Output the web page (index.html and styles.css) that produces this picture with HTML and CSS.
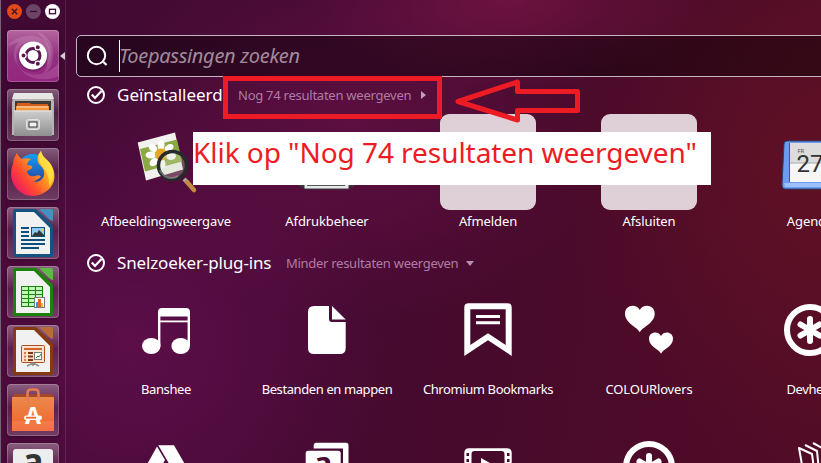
FILE: index.html
```
<!DOCTYPE html>
<html lang="nl">
<head>
    <meta charset="UTF-8">
    <meta name="viewport" content="width=device-width, initial-scale=1.0">
    <title>Toepassingen zoeken</title>
    <link rel="stylesheet" href="styles.css">
</head>
<body>
    <aside class="launcher">
        <div class="window-buttons">
            <svg width="60" height="16" viewBox="0 0 60 16">
                <circle cx="7.5" cy="7.5" r="7.5" fill="#df4b16"/>
                <path d="M4.8 4.8l5.4 5.4M10.2 4.8l-5.4 5.4" stroke="#4a1626" stroke-width="1.4"/>
                <circle cx="26.4" cy="7.5" r="7.5" fill="#6c4465"/>
                <path d="M23 7.5h7" stroke="#3d0b31" stroke-width="1.3"/>
                <circle cx="45.5" cy="7.5" r="7.5" fill="#fff"/>
                <rect x="42.5" y="5.3" width="6" height="4.4" fill="none" stroke="#3d0b31" stroke-width="1.3"/>
            </svg>
        </div>
        <div class="tile tile-dash">
            <svg viewBox="0 0 52 52">
                <g fill="#fff" fill-opacity=".13">
                    <path d="M0 16C10 4 32 2 41 14c5 8 3 16-1 22c1-12-3-22-14-24C16 10 8 18 9 32C5 28 6 18 12 12z"/>
                    <path d="M9 22C6 36 18 47 34 44c8-2 14-6 18-12v14c-14 6-32 4-39-8c-3-5-4-10-4-16z"/>
                    <path d="M30 2c14 4 20 18 14 34c-1 3-4 6-8 8c8-12 9-28-6-42z"/>
                </g>
                <circle cx="26" cy="27" r="14.5" fill="#5d1552" opacity=".5"/>
                <circle cx="26" cy="25.5" r="14" fill="#fff"/>
                <circle cx="26" cy="25.5" r="7" fill="none" stroke="#5a1750" stroke-width="3"/>
                <g fill="#5a1750" stroke="#fff" stroke-width="1.2">
                    <circle cx="16.5" cy="25.5" r="2.6"/>
                    <circle cx="30.8" cy="17.3" r="2.6"/>
                    <circle cx="30.8" cy="33.7" r="2.6"/>
                </g>
            </svg>
            <span class="active-arrow"></span>
        </div>
        <div class="tile">
            <svg viewBox="0 0 52 52">
                <defs>
                    <linearGradient id="drawer" x1="0" y1="0" x2="0" y2="1">
                        <stop offset="0" stop-color="#cfcfcf"/><stop offset="1" stop-color="#8f8f8f"/>
                    </linearGradient>
                </defs>
                <path d="M7 4h38l2 9v33H5V13z" fill="#b4b4b2"/>
                <path d="M7 4h38l2 6H5z" fill="#e6e6e4"/>
                <rect x="8" y="12" width="36" height="10" fill="#403a38"/>
                <path d="M10 14h13l1 1h17v6H10z" fill="#d35d1e"/>
                <path d="M9 17h33v5H9z" fill="#f3953b"/>
                <path d="M10 18h31" stroke="#ffe0b5"/>
                <rect x="7" y="21.5" width="38" height="25.5" fill="url(#drawer)"/>
                <path d="M7 22h38" stroke="#e8e8e8"/>
                <rect x="19.5" y="30.5" width="13" height="10" rx="2" fill="#cbcbcb" stroke="#e4e4e4"/>
                <rect x="22" y="33" width="8" height="5" fill="#f3f3f3" stroke="#333"/>
            </svg>
        </div>
        <div class="tile">
            <svg viewBox="0 0 52 52">
                <defs>
                    <linearGradient id="fox" x1="1" y1="0" x2="0" y2=".8">
                        <stop offset="0" stop-color="#fff44a"/><stop offset=".4" stop-color="#ffa41c"/>
                        <stop offset=".7" stop-color="#ff4a32"/><stop offset="1" stop-color="#e8116d"/>
                    </linearGradient>
                    <linearGradient id="globe" x1="0" y1="0" x2="0" y2="1">
                        <stop offset="0" stop-color="#159df5"/><stop offset="1" stop-color="#28318f"/>
                    </linearGradient>
                </defs>
                <circle cx="26" cy="23" r="17" fill="url(#globe)"/>
                <path d="M10 5c1 3 3 5 5 6c3-1 6-1 9 0c-3 2-4 4-4 6l5 1c1 2-2 4-5 5c0 4 4 6 8 5c3-1 5-1 6 1c-3 2-5 4-8 4c5 2 10-1 11-6c1-5-2-8-5-11c-3-5-1-10 2-13c1 5 4 7 8 11c8 9 7 22-1 28c-9 8-23 8-31-1C3 33 3 23 6 16c0-4 2-8 4-11z" fill="url(#fox)"/>
                <path d="M34 3c1 5 4 7 8 11c6 8 6 18 0 24c1-9-3-15-7-20c-4-6-4-11-1-15z" fill="#ffe54a" opacity=".8"/>
            </svg>
        </div>
        <div class="tile">
            <svg viewBox="0 0 52 52">
                <path d="M8 2h21l17 17v29q0 2-2 2H8q-2 0-2-2V4q0-2 2-2z" fill="#14527f"/>
                <path d="M33 2h11q2 0 2 2v10q-2 0-4-2l-7-7q-2-1-2-3z" fill="#4690bf"/>
                <path d="M9 5h18l16 16v26H9z" fill="#f1f1f1"/>
                <g stroke="#0d4f7c" stroke-width="2">
                    <path d="M14 21h8M14 25h8M14 29h8M14 33h24M14 37h24M14 41h18"/>
                </g>
                <rect x="24.5" y="20.5" width="13" height="9" fill="#8dcbf4" stroke="#0d4f7c"/>
                <path d="M25 29l3-4 2 1 2-3 5 5v1z" fill="#373737"/>
                <circle cx="35" cy="23" r="1.3" fill="#f2cf4a"/>
            </svg>
        </div>
        <div class="tile">
            <svg viewBox="0 0 52 52">
                <path d="M8 2h21l17 17v29q0 2-2 2H8q-2 0-2-2V4q0-2 2-2z" fill="#1b8209"/>
                <path d="M33 2h11q2 0 2 2v10q-2 0-4-2l-7-7q-2-1-2-3z" fill="#5cba45"/>
                <path d="M9 5h18l16 16v26H9z" fill="#f1f1f1"/>
                <rect x="14" y="20" width="22" height="21" fill="#168507"/>
                <g fill="#c4f5ba">
                    <path d="M15 21h6v3h-6zM22 21h6v3h-6zM29 21h6v3h-6zM15 25h6v3h-6zM15 29h6v3h-6zM15 33h6v3h-6zM15 37h6v3h-6z"/>
                    <path d="M22 25h6v3h-6zM29 25h6v3h-6zM22 29h6v3h-6zM29 29h6v3h-6zM22 33h6v3h-6zM22 37h6v3h-6z"/>
                </g>
                <rect x="27.5" y="31.5" width="10" height="10" fill="#fff" stroke="#777"/>
                <path d="M29 36h2v5h-2z" fill="#3d94d8"/>
                <path d="M31 33h3v8h-3z" fill="#e3641b"/>
                <path d="M34 37h2v4h-2z" fill="#f0b43d"/>
            </svg>
        </div>
        <div class="tile">
            <svg viewBox="0 0 52 52">
                <path d="M8 2h21l17 17v29q0 2-2 2H8q-2 0-2-2V4q0-2 2-2z" fill="#843b10"/>
                <path d="M33 2h11q2 0 2 2v10q-2 0-4-2l-7-7q-2-1-2-3z" fill="#bb6b37"/>
                <path d="M9 5h18l16 16v26H9z" fill="#f1f1f1"/>
                <rect x="14.5" y="20.5" width="23" height="17" rx="1" fill="#fbe3d1" stroke="#b34e18"/>
                <path d="M17 24h18" stroke="#d2622a" stroke-width="2"/>
                <path d="M17 28h2M17 31.5h2M17 35h2" stroke="#e07a42" stroke-width="2"/>
                <path d="M21 28h5M21 31.5h5M21 35h5" stroke="#8a3409" stroke-width="2"/>
                <rect x="27.5" y="27.5" width="7" height="7" fill="#fff" stroke="#777"/>
                <path d="M29 33l2-2 1 1 2-3" fill="none" stroke="#2b9c2b"/>
                <path d="M20 41l6-3 6 3M26 38v3" fill="none" stroke="#8c8c8c" stroke-width="1.5"/>
            </svg>
        </div>
        <div class="tile">
            <svg viewBox="0 0 52 52">
                <defs>
                    <linearGradient id="bag" x1="0" y1="0" x2="0" y2="1">
                        <stop offset="0" stop-color="#e98a4b"/><stop offset="1" stop-color="#f2622b"/>
                    </linearGradient>
                </defs>
                <path d="M7 10h38l2 4H5z" fill="#a8462a"/>
                <rect x="5" y="13" width="42" height="34" fill="url(#bag)"/>
                <rect x="5" y="37" width="42" height="10" fill="#fff" opacity=".1"/>
                <path d="M20.500 17V9q0-3.500 3.500-3.500h4q3.500 0 3.500 3.500v8" fill="none" stroke="#e67a50" stroke-width="2.6"/>
                <text x="26" y="40" class="bag-letter">A</text>
                <rect x="17" y="31.5" width="18" height="4.4" rx="2.2" fill="#fff"/>
                <path d="M19 33.700h10" stroke="#f0662c" stroke-width="1.8"/>
            </svg>
        </div>
        <div class="tile">
            <svg viewBox="0 0 52 52">
                <rect x="6" y="6" width="40" height="40" rx="3" fill="#ededed"/>
                <text x="26" y="31" class="amazon-letter">a</text>
            </svg>
        </div>
    </aside>

    <main class="dash">
        <div class="search">
            <svg class="search-icon" width="24" height="24" viewBox="0 0 24 24">
                <circle cx="10.5" cy="11.5" r="8.7" fill="none" stroke="#fff" stroke-width="2"/>
                <path d="M17.500 18l3 3" stroke="#fff" stroke-width="2.2"/>
            </svg>
            <span class="placeholder">Toepassingen zoeken</span>
        </div>

        <section class="group installed-group">
            <div class="group-header">
                <svg class="check" width="20" height="20" viewBox="0 0 20 20">
                    <circle cx="10" cy="10" r="8" fill="none" stroke="#fff" stroke-width="2"/>
                    <path d="M5.800 9.500l3.200 3.500 6.500-7" fill="none" stroke="#fff" stroke-width="2.2"/>
                </svg>
                <h2 class="installed">Geïnstalleerd</h2>
                <span class="more">Nog 74 resultaten weergeven</span>
                <span class="arrow-right"></span>
            </div>
            <div class="grid">
                <div class="app">
                    <svg viewBox="0 0 96 96">
                        <path d="M19.700 28.500L57 18.500l8 37-37 11z" fill="#f1f1ee"/>
                        <path d="M22 35l37-9.500 5 22-37 10z" fill="#8aa843"/>
                        <g fill="#fff">
                            <ellipse cx="43" cy="31" rx="3.5" ry="5.5"/>
                            <ellipse cx="51" cy="34" rx="5" ry="3.5" transform="rotate(-35 51 34)"/>
                            <ellipse cx="35" cy="34" rx="5" ry="3.5" transform="rotate(40 35 34)"/>
                            <ellipse cx="33" cy="41" rx="5.5" ry="3.5"/>
                            <ellipse cx="36" cy="48" rx="5" ry="3.5" transform="rotate(-40 36 48)"/>
                            <ellipse cx="44" cy="50" rx="3.5" ry="5"/>
                            <ellipse cx="53" cy="42" rx="5" ry="4"/>
                        </g>
                        <circle cx="43" cy="40.5" r="6" fill="#e7a523"/>
                        <circle cx="54.5" cy="51.5" r="14" fill="#cdd8bb" fill-opacity=".3" stroke="#262b2a" stroke-width="3.5"/>
                        <path d="M42 56c3 8 12 10 18 6" fill="none" stroke="#fff" stroke-width="2" opacity=".3"/>
                        <path d="M66 65l4 4" stroke="#a9a9a9" stroke-width="4"/>
                        <path d="M69 68l7 8" stroke="#c38a42" stroke-width="4.5" stroke-linecap="round"/>
                    </svg>
                    <span>Afbeeldingsweergave</span>
                </div>
                <div class="app">
                    <svg viewBox="0 0 96 96">
                        <path d="M19 70h57l-2 3H21z" fill="#343a3c"/>
                        <path d="M25 60h45v15H25z" fill="#e9e9e9" stroke="#343a3c"/>
                        <path d="M28 71.500h38" stroke="#555" stroke-width="1.2"/>
                    </svg>
                    <span>Afdrukbeheer</span>
                </div>
                <div class="app">
                    <div class="blank"></div>
                    <span>Afmelden</span>
                </div>
                <div class="app">
                    <div class="blank"></div>
                    <span>Afsluiten</span>
                </div>
                <div class="app">
                    <svg viewBox="0 0 96 96">
                        <path d="M25 27h50v48H23q-3 0-3-4l2-41q0-3 3-3z" fill="#6a9df0" stroke="#27406f"/>
                        <path d="M22 69h53v4H23z" fill="#9cc1ff"/>
                        <rect x="27" y="29" width="48" height="39" fill="#f6f6f6"/>
                        <rect x="27" y="29" width="48" height="20" fill="#dcdcdc"/>
                        <path d="M27 49h48" stroke="#aaa"/>
                        <path d="M27.500 29v39" stroke="#555"/>
                        <text x="35.5" y="39" class="cal-day">FR</text>
                        <text x="34.5" y="58" class="cal-date">27</text>
                    </svg>
                    <span>Agenda</span>
                </div>
            </div>
        </section>

        <section class="group plugins-group">
            <div class="group-header">
                <svg class="check" width="20" height="20" viewBox="0 0 20 20">
                    <circle cx="10" cy="10" r="8" fill="none" stroke="#fff" stroke-width="2"/>
                    <path d="M5.800 9.500l3.200 3.500 6.500-7" fill="none" stroke="#fff" stroke-width="2.2"/>
                </svg>
                <h2 class="plugins">Snelzoeker-plug-ins</h2>
                <span class="more">Minder resultaten weergeven</span>
                <span class="arrow-down"></span>
            </div>
            <div class="grid">
                <div class="app">
                    <svg viewBox="0 0 96 96" fill="#fff">
                        <path d="M40 34.500V30q0-4 4-4h24q4 0 4 4v4.500z"/>
                        <path d="M40 38.500h32v1.800H40z"/>
                        <path d="M40 34h2.400v30H40zM69.600 34H72v30h-2.400z"/>
                        <ellipse cx="33.3" cy="64" rx="9.3" ry="8"/>
                        <ellipse cx="62.7" cy="64" rx="9.3" ry="8"/>
                    </svg>
                    <span>Banshee</span>
                </div>
                <div class="app">
                    <svg viewBox="0 0 96 96" fill="#fff">
                        <path d="M35 24h15v13q0 3 3 3h13.700v26q0 6-6 6H35q-6 0-6-6V30q0-6 6-6z"/>
                        <path d="M53 24l13.700 13.500H53z"/>
                    </svg>
                    <span>Bestanden en mappen</span>
                </div>
                <div class="app">
                    <svg viewBox="0 0 96 96" fill="#fff">
                        <path fill-rule="evenodd" d="M24.300 25.500q0-4.200 4.200-4.200h39q4.200 0 4.200 4.200V74L48 58.300 24.300 74zM30.300 27.300V63L48 51.300 65.700 63V27.300z"/>
                        <path d="M36 33h24v3H36zM36 39.200h24v3H36z"/>
                    </svg>
                    <span>Chromium Bookmarks</span>
                </div>
                <div class="app">
                    <svg viewBox="0 0 96 96" fill="#fff">
                        <path d="M38.800 50.300C36 44.500 24 41.500 24 31.500c0-8.500 11-10.500 14.800-3.500c3.800-7 14.900-5 14.900 3.500c0 10-12 13-14.900 18.800z"/>
                        <path d="M60 71.700C58 67 48 64.800 48 56.800c0-7 9-8.500 12-2.800c3-5.700 12-4.200 12 2.800c0 8-10 10.200-12 14.900z"/>
                    </svg>
                    <span class="wide">COLOURlovers</span>
                </div>
                <div class="app">
                    <svg viewBox="0 0 96 96" fill="none" stroke="#fff" stroke-width="6">
                        <circle cx="48" cy="48" r="23"/>
                        <path d="M48 37v22M38.500 42.500l19 11M57.500 42.500l-19 11" stroke-linecap="round"/>
                    </svg>
                    <span>Devhelp</span>
                </div>
                <div class="app">
                    <svg viewBox="0 0 96 96" fill="#fff">
                        <path d="M39 27.500L47 41 32 68l-8-13.500z"/>
                        <path d="M40.300 26.300H56L72 54H56.500z"/>
                        <path d="M42 57h30l-8 13H34z"/>
                    </svg>
                </div>
                <div class="app">
                    <svg viewBox="0 0 96 96" fill="#fff">
                        <path d="M37 23.700h30q2.500 0 2.500 2.500V62h-5.500V29.500H34.700v-3.300q0-2.500 2.300-2.500z"/>
                        <rect x="26.7" y="31.8" width="35" height="38" rx="2.5"/>
                        <text x="44" y="55" class="card-letter">a</text>
                    </svg>
                </div>
                <div class="app">
                    <svg viewBox="0 0 96 96" fill="#fff">
                        <path fill-rule="evenodd" d="M29 29.300h38q4.700 0 4.700 4.700v32H24.300V34q0-4.700 4.700-4.700zM34.500 32q-3 0-3 3v27h33V35q0-3-3-3zM26.500 34v3H29v-3zM67 34v3h2.500v-3zM26.500 40v3H29v-3zM67 40v3h2.500v-3z"/>
                        <path d="M41 39l16 9-16 9z"/>
                    </svg>
                </div>
                <div class="app">
                    <svg viewBox="0 0 96 96" fill="none" stroke="#fff" stroke-width="6">
                        <circle cx="48" cy="48" r="23"/>
                        <path d="M48 37v22M38.500 42.500l19 11M57.500 42.500l-19 11" stroke-linecap="round"/>
                    </svg>
                </div>
                <div class="app">
                    <svg viewBox="0 0 96 96" fill="none" stroke="#fff" stroke-width="2" stroke-linejoin="round">
                        <path d="M37 29l13 6 4 30-12-8z"/>
                        <path d="M43 26l12 6 3 30"/>
                        <path d="M51 24l11 6 1 30"/>
                    </svg>
                </div>
            </div>
        </section>
    </main>

    <!-- uitleg over het scherm heen -->
    <div class="highlight"></div>
    <svg class="pointer" width="130" height="50" viewBox="0 0 130 50">
        <path d="M6 25.500L65.500 6v9.500h60v19h-60V44z" fill="none" stroke="#ed1c24" stroke-width="5" stroke-linejoin="round"/>
    </svg>
    <div class="callout">Klik op "Nog 74 resultaten weergeven"</div>
</body>
</html>
```

FILE: styles.css
```
* { box-sizing: border-box; }
body {
    margin: 0;
    width: 821px;
    height: 463px;
    overflow: hidden;
    position: relative;
    display: flex;
    color: #fff;
    font-family: "Noto Sans", "Open Sans", sans-serif;
    font-size: 13px;
    background:
        radial-gradient(ellipse 200px 90px at 510px 0, rgba(125, 22, 72, 0.7), transparent),
        radial-gradient(ellipse 260px 190px at 350px 130px, rgba(108, 18, 74, 0.6), transparent),
        radial-gradient(ellipse 250px 260px at 130px 340px, rgba(98, 15, 78, 0.8), transparent),
        radial-gradient(ellipse 260px 300px at 821px 170px, rgba(98, 17, 36, 0.85), transparent),
        linear-gradient(100deg, #400933 0%, #450a34 35%, #470a2c 60%, #520c26 100%);
}

/* launcher */
.launcher { width: 66px; flex: none; padding-left: 6px; border-left: 1px solid #706570; border-right: 1px solid rgba(255, 255, 255, 0.1); }
.window-buttons { height: 30px; padding-top: 4px; }
.window-buttons svg { display: block; }
.tile { position: relative; width: 52px; height: 52px; margin-bottom: 7px; border-radius: 4px; background: linear-gradient(rgba(255, 255, 255, 0.34), rgba(255, 255, 255, 0.08) 45%, rgba(255, 255, 255, 0.2)); box-shadow: inset 0 0 0 1px rgba(255, 255, 255, 0.2), 0 1px 4px rgba(0, 0, 0, 0.3); }
.tile svg { display: block; width: 52px; height: 52px; }
.tile-dash { background: linear-gradient(#b5669f, #92307f 50%, #96257f); }
.active-arrow { position: absolute; right: -6px; top: 22px; border: 4px solid transparent; border-right: 5px solid #d5cdd3; border-left: 0; }
.bag-letter { font: bold 23px "Noto Sans", sans-serif; fill: #fff; text-anchor: middle; }
.amazon-letter { font: bold 35px "Noto Sans", sans-serif; fill: #333; text-anchor: middle; }

/* dash */
.dash { flex: none; width: 825px; padding: 35px 0 0 10px; }
.search { display: flex; align-items: center; height: 42px; padding-left: 9px; border: 1px solid #c5b4c0; border-radius: 5px; background: rgba(0, 0, 0, 0.4); }
.search-icon { flex: none; }
.placeholder { margin-left: 9px; height: 32px; line-height: 31px; border-left: 1px solid #fff; font-size: 20px; font-style: italic; color: #a28a9d; letter-spacing: -0.3px; text-indent: -1px; white-space: nowrap; }

.group-header { display: flex; align-items: center; height: 36px; padding-left: 10px; white-space: nowrap; }
.check { flex: none; margin-right: 11px; }
.group-header h2 { margin: 0; font-size: 17px; font-weight: normal; line-height: 36px; }
.installed { width: 121px; }
.plugins { width: 169px; letter-spacing: -0.15px; }
.more { color: #b27ba5; letter-spacing: -0.25px; }
.plugins-group .more { letter-spacing: -0.28px; }
.arrow-right { margin-left: 10px; border: 4px solid transparent; border-left: 5px solid #c39fbb; border-right: 0; }
.arrow-down { margin-left: 8px; border: 4px solid transparent; border-top: 5px solid #b88fb0; border-bottom: 0; }

.grid { display: grid; grid-template-columns: repeat(5, 161px); padding: 1px 0 0 9.5px; }
.app { display: flex; flex-direction: column; align-items: center; height: 137px; }
.installed-group .app { height: 131px; }
.app svg, .blank { display: block; width: 96px; height: 96px; flex: none; }
.blank { border-radius: 9px; background: #dfd0d7; }
.app span { margin-top: 1px; line-height: 20px; white-space: nowrap; letter-spacing: -0.1px; }
.plugins-group .app span { letter-spacing: -0.4px; }
.plugins-group .app .wide { letter-spacing: -0.15px; }
.cal-day { font: 6px "Noto Sans", sans-serif; fill: #555; }
.cal-date { font: 24px Roboto, sans-serif; fill: #333; }
.card-letter { font: bold 31px "Noto Sans", sans-serif; fill: #4b0b33; text-anchor: middle; }

/* annotations */
.highlight { position: absolute; left: 223px; top: 76px; width: 219px; height: 43px; border: 5px solid #ed1c24; }
.pointer { position: absolute; left: 452px; top: 76px; }
.callout { position: absolute; left: 193px; top: 132px; width: 518px; height: 53px; background: #fff; color: #ed1c24; font-size: 28px; line-height: 40px; letter-spacing: -0.05px; white-space: nowrap; }
```
